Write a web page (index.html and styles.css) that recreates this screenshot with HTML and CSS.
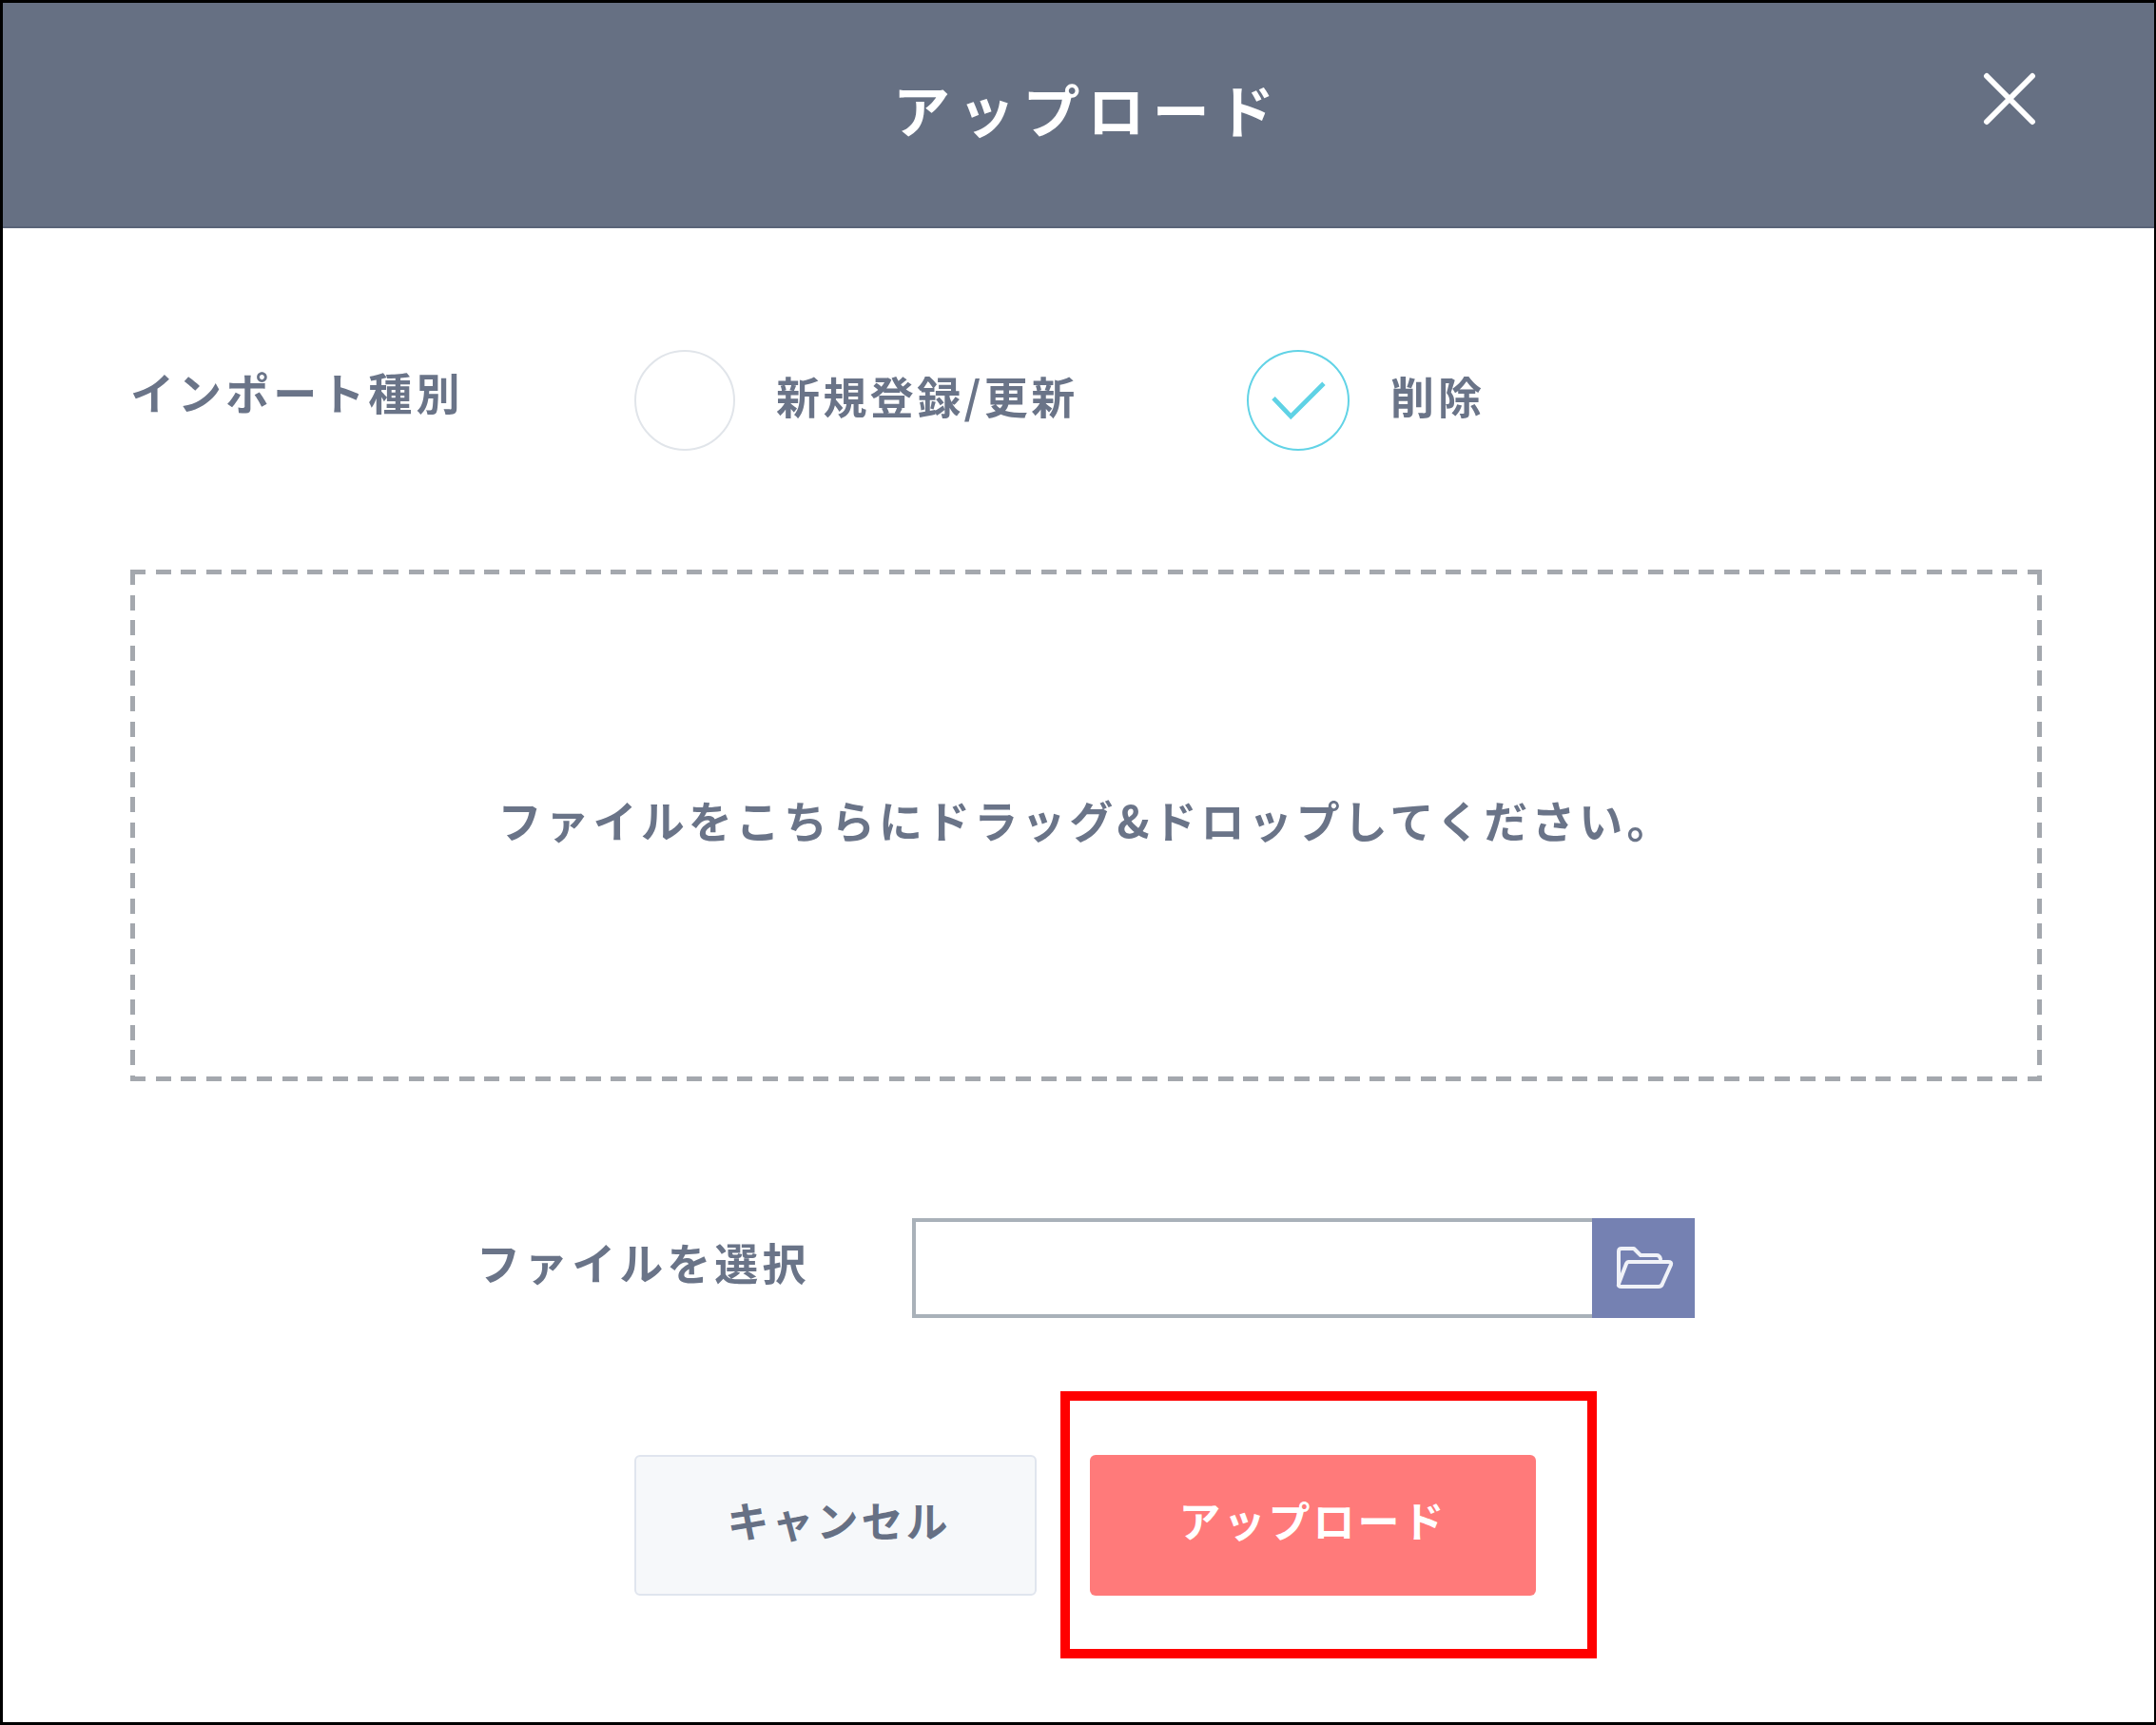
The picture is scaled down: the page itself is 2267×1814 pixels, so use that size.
FILE: index.html
```html
<!DOCTYPE html>
<html lang="ja">
<head>
<meta charset="utf-8">
<title>アップロード</title>
<link rel="stylesheet" href="styles.css">
</head>
<body>
<div class="frame">
  <header class="head">
    <h1 class="title">アップロード</h1>
    <svg class="close" viewBox="0 0 56 56"><path d="M4 4L52 52M52 4L4 52"/></svg>
  </header>
  <main class="body">
    <div class="type-row">
      <span class="label type-label">インポート種別</span>
      <div class="option option-new">
        <span class="radio"></span>
        <span class="label label-tight">新規登録/更新</span>
      </div>
      <div class="option">
        <span class="radio radio-on">
          <svg class="check" viewBox="0 0 108 105"><path d="M27 50L46 70L82 34"/></svg>
        </span>
        <span class="label">削除</span>
      </div>
    </div>
    <div class="drop">
      <p class="label drop-text">ファイルをこちらにドラッグ&amp;ドロップしてください。</p>
    </div>
    <div class="file-row">
      <span class="label file-label">ファイルを選択</span>
      <div class="file-input"></div>
      <div class="file-btn">
        <svg class="folder" viewBox="0 0 108 105">
          <path d="M28 70V35Q28 32 31 32H44L51 39H68Q71 39 72 43"/>
          <path d="M38 46H80Q84 46 83 49L74 69Q73 72 70 72H31Q27 72 28 69L36 48Q37 46 38 46Z"/>
        </svg>
      </div>
    </div>
    <div class="btn-row">
      <button class="btn btn-cancel">キャンセル</button>
      <button class="btn btn-upload">アップロード</button>
    </div>
  </main>
  <div class="mark"></div>
</div>
</body>
</html>
```
FILE: styles.css
```css
* { box-sizing: border-box; }
html, body { margin: 0; padding: 0; background: #fff; }
body { font-family: "Noto Sans CJK JP", "Noto Sans", sans-serif; color: #6a7488; }
.frame {
  position: relative;
  width: 2267px;
  height: 1814px;
  border: solid #000;
  border-width: 3px 2px 3px 3px;
  background: #fff;
  overflow: hidden;
}
.head {
  height: 237px;
  background: #667083;
  border-bottom: 2px solid #5a6478;
  display: flex;
  padding-right: 124px;
  filter: blur(0.5px);
}
.title {
  margin: 0 0 0 936px;
  padding-top: 69px;
  font-size: 60px;
  line-height: 84px;
  font-weight: 700;
  letter-spacing: 8.2px;
  color: #fff;
  white-space: nowrap;
}
.close {
  margin: 73px 0 0 auto;
  width: 56px;
  height: 56px;
  fill: none;
  stroke: #fff;
  stroke-width: 6;
  stroke-linecap: round;
}
.body { padding: 128px 117px 0 134px; filter: blur(0.7px); }
.label {
  font-size: 46px;
  line-height: 60px;
  font-weight: 700;
  letter-spacing: 4.07px;
  white-space: nowrap;
}
.label-tight { letter-spacing: 3.4px; }
.type-row { display: flex; align-items: center; height: 106px; }
.type-label { width: 530px; margin-top: -20px; }
.option { display: flex; align-items: center; gap: 43px; }
.option .label { margin-top: -12px; }
.option-new { width: 644px; }
.radio {
  display: block;
  width: 106px;
  height: 106px;
  border: 2px solid #e1e5ea;
  border-radius: 50%;
}
.radio-on { width: 108px; border-color: #62d3e6; }
.check {
  display: block;
  width: 104px;
  height: 102px;
  fill: none;
  stroke: #5fd2e5;
  stroke-width: 5;
}
.drop {
  margin-top: 125px;
  width: 2010px;
  height: 538px;
  display: flex;
  align-items: center;
  justify-content: center;
  background:
    repeating-linear-gradient(90deg, #a4a8ae 0 16px, transparent 16px 26.6px) top left / 100% 5px no-repeat,
    repeating-linear-gradient(90deg, #a4a8ae 0 16px, transparent 16px 26.6px) bottom left / 100% 5px no-repeat,
    repeating-linear-gradient(180deg, #a4a8ae 0 16px, transparent 16px 26.6px) top left / 5px 100% no-repeat,
    repeating-linear-gradient(180deg, #a4a8ae 0 16px, transparent 16px 26.6px) top right / 5px 100% no-repeat;
}
.drop-text { margin: 0; padding-bottom: 14px; }
.file-row { margin-top: 144px; display: flex; align-items: center; padding-left: 364px; }
.file-label { width: 458px; margin-top: -16px; }
.file-input { width: 715px; height: 105px; border: 4px solid #a9b1b9; border-right: 0; background: #fff; }
.file-btn { width: 108px; height: 105px; background: #7581b2; }
.folder {
  display: block;
  width: 108px;
  height: 105px;
  fill: none;
  stroke: #f0f2f8;
  stroke-width: 4;
  stroke-linejoin: round;
  stroke-linecap: round;
}
.btn-row { margin-top: 144px; display: flex; gap: 56px; padding-left: 530px; }
.btn {
  height: 148px;
  padding: 0 0 12px;
  border-radius: 6px;
  font-family: inherit;
  font-size: 44px;
  font-weight: 700;
  letter-spacing: 3px;
}
.btn-cancel { width: 423px; padding-left: 7px; background: #f6f8fa; border: 2px solid #e0e5ee; color: #667084; }
.btn-upload { width: 469px; background: #ff7a7a; border: 0; color: #fff; }
.mark {
  position: absolute;
  left: 1112px;
  top: 1460px;
  width: 564px;
  height: 281px;
  border: 10px solid #f00;
}
```
